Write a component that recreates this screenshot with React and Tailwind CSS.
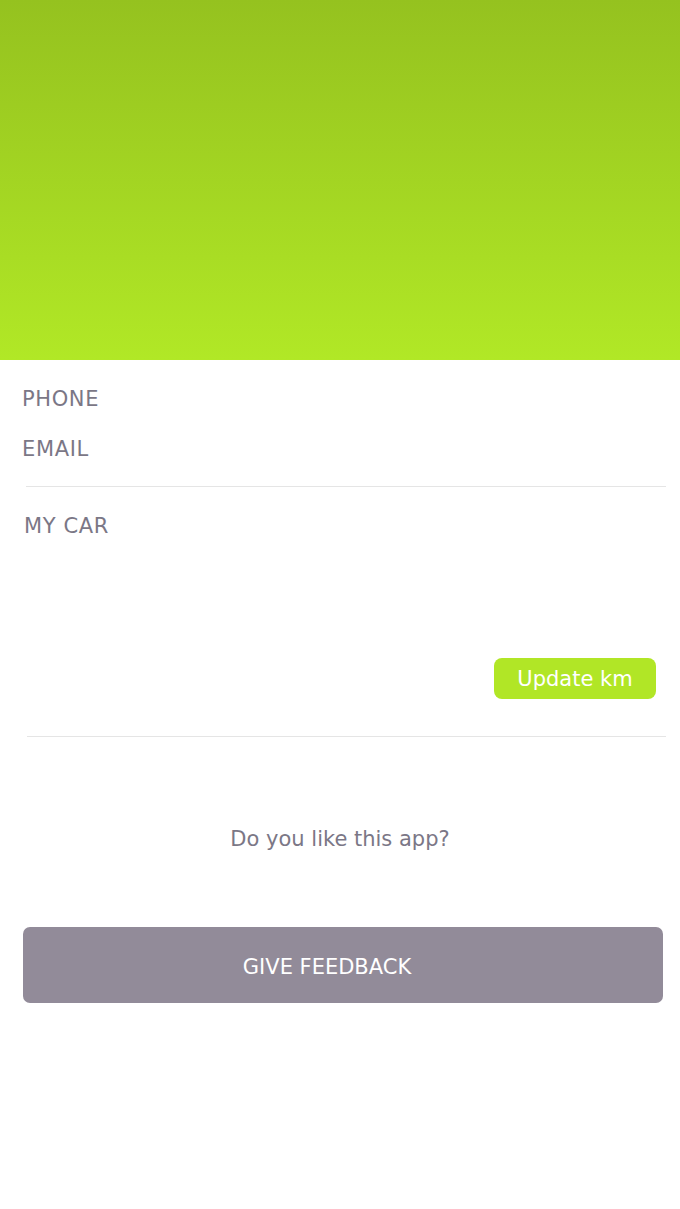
export default function App() {
  return (
    <div
      className="min-h-[1209px] w-full bg-white"
      style={{ fontFamily: '"DejaVu Sans", "Open Sans", sans-serif' }}
    >
      <div className="h-[360px] w-full bg-gradient-to-b from-[#95c21f] to-[#b1e826]" />

      <div className="px-[22px] pt-[25px]">
        <div className="text-[21px] leading-[28px] tracking-[0.03em] text-[#7b7786]">PHONE</div>
        <div className="mt-[22px] text-[21px] leading-[28px] tracking-[0.03em] text-[#7b7786]">EMAIL</div>
      </div>

      <div className="ml-[26px] mr-[14px] mt-[23px] h-px bg-[#e5e5e5]" />

      <div className="px-[24px] pt-[25px] text-[21px] leading-[28px] tracking-[0.03em] text-[#7b7786]">
        MY CAR
      </div>

      <div className="flex justify-end px-[24px] pt-[118px]">
        <button
          type="button"
          className="h-[41px] w-[162px] rounded-[8px] bg-[#b1e626] pt-[2px] text-[21px] text-white"
        >
          Update km
        </button>
      </div>

      <div className="ml-[27px] mr-[14px] mt-[37px] h-px bg-[#e5e5e5]" />

      <div className="pt-[88px] text-center text-[21px] leading-[28px] text-[#7b7786]">
        Do you like this app?
      </div>

      <div className="pl-[23px] pr-[17px] pt-[74px]">
        <button
          type="button"
          className="h-[76px] w-full rounded-[7px] bg-[#928b99] pr-[32px] pt-[5px] text-[21px] text-white"
        >
          GIVE FEEDBACK
        </button>
      </div>
    </div>
  );
}
